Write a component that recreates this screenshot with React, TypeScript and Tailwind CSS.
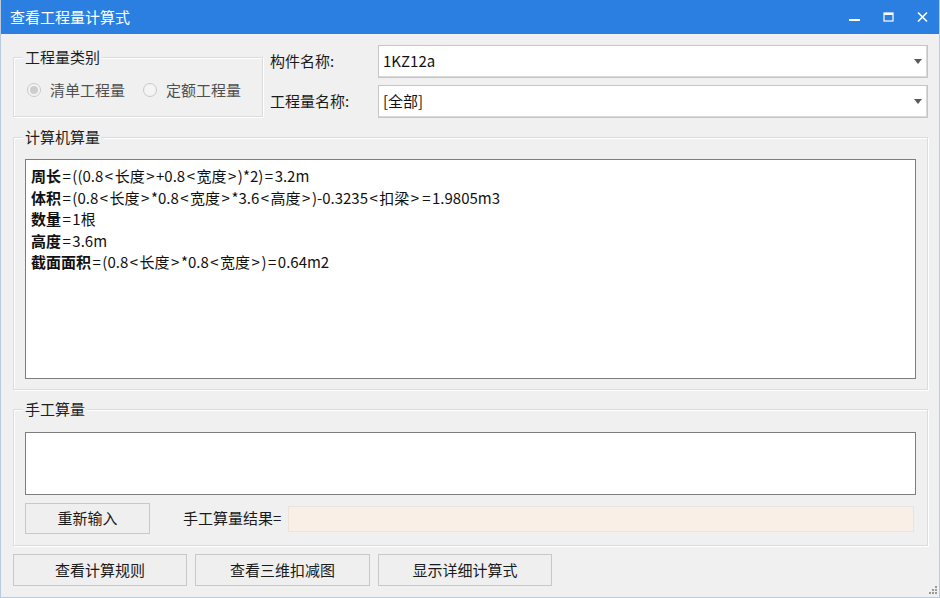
import React from "react"

const font = { fontFamily: '"Noto Sans CJK SC", "Noto Sans", sans-serif' }

function GroupBox({ title, className, children }: { title: string; className: string; children?: React.ReactNode }) {
  return (
    <div className={`relative border border-[#dcdcdc] shadow-[inset_1px_1px_0_#ffffff,1px_1px_0_#ffffff] ${className}`}>
      <span className="absolute left-[9px] top-[-12px] bg-[#f0f0f0] px-[2px] text-[15px] leading-[22px] text-[#1e1e1e]">
        {title}
      </span>
      {children}
    </div>
  )
}

function Radio({ label, checked }: { label: string; checked?: boolean }) {
  return (
    <div className="flex items-center gap-[9px]">
      <span className="flex h-[14px] w-[14px] items-center justify-center rounded-full border border-[#c9c9c9] bg-[#f4f4f4]">
        {checked && <span className="h-[8px] w-[8px] rounded-full bg-[#cdcdcd]" />}
      </span>
      <span className="text-[15px] text-[#4f4f4f]">{label}</span>
    </div>
  )
}

function Combo({ value }: { value: string }) {
  return (
    <div className="flex h-[33px] w-[550px] items-center justify-between border border-[#c6c6c6] bg-white pl-[4px] pr-[5px] shadow-[inset_-1px_-1px_0_#dadada]">
      <span className="text-[15px] text-[#111]">{value}</span>
      <svg width="8" height="5" viewBox="0 0 8 5">
        <path d="M0 0 H8 L4 5 Z" fill="#5a5a5a" />
      </svg>
    </div>
  )
}

function Button({ label, className }: { label: string; className: string }) {
  return (
    <div className={`flex items-center justify-center border border-[#c8c8c8] bg-[#efefef] text-[15px] text-[#1a1a1a] ${className}`}>
      {label}
    </div>
  )
}

const lines: [string, string][] = [
  ["周长", "=((0.8<长度>+0.8<宽度>)*2)=3.2m"],
  ["体积", "=(0.8<长度>*0.8<宽度>*3.6<高度>)-0.3235<扣梁>=1.9805m3"],
  ["数量", "=1根"],
  ["高度", "=3.6m"],
  ["截面面积", "=(0.8<长度>*0.8<宽度>)=0.64m2"],
]

// the dialog font sets < > and = wider than Noto does
function Formula({ text }: { text: string }) {
  return (
    <>
      {text.split(/([<>=])/).map((part, i) =>
        part === "<" || part === ">" || part === "=" ? (
          <span key={i} className="mx-[1.5px]">
            {part}
          </span>
        ) : (
          <span key={i}>{part}</span>
        )
      )}
    </>
  )
}

export default function App() {
  return (
    <div style={font} className="flex h-[598px] w-[940px] flex-col overflow-hidden border-x border-b border-[#b9c9de] bg-[#f0f0f0]">
      {/* title bar */}
      <div className="flex h-[34px] shrink-0 items-center justify-between bg-[#2b7fe0] pl-[9px] pr-[10px] text-white">
        <span className="text-[15px]">查看工程量计算式</span>
        <div className="flex items-center gap-[21px]">
          <svg width="13" height="12" viewBox="0 0 13 12">
            <rect x="1" y="8" width="11" height="2" fill="#fff" />
          </svg>
          <svg width="13" height="12" viewBox="0 0 13 12">
            <rect x="2" y="2" width="9" height="8" fill="none" stroke="#fff" strokeWidth="1.2" />
            <rect x="2" y="2" width="9" height="2" fill="#fff" />
          </svg>
          <svg width="13" height="12" viewBox="0 0 13 12">
            <path d="M2 1.5 L11 10.5 M11 1.5 L2 10.5" stroke="#fff" strokeWidth="1.6" />
          </svg>
        </div>
      </div>

      <div className="flex flex-col pl-[12px]">
        {/* top row */}
        <div className="mt-[11px] flex">
          <GroupBox title="工程量类别" className="mt-[12px] h-[60px] w-[250px]">
            <div className="mt-[21px] flex gap-[18px] pl-[13px]">
              <Radio label="清单工程量" checked />
              <Radio label="定额工程量" />
            </div>
          </GroupBox>
          <div className="ml-[7px] flex flex-col gap-[7px]">
            <div className="flex items-center">
              <span className="w-[108px] text-[15px] text-[#1a1a1a]">构件名称:</span>
              <Combo value="1KZ12a" />
            </div>
            <div className="flex items-center">
              <span className="w-[108px] text-[15px] text-[#1a1a1a]">工程量名称:</span>
              <Combo value="[全部]" />
            </div>
          </div>
        </div>

        {/* computer calculation */}
        <GroupBox title="计算机算量" className="mt-[19px] h-[253px] w-[915px]">
          <div className="ml-[11px] mt-[21px] h-[220px] w-[891px] border border-[#7e7e7e] bg-white pl-[5px] pt-[5px] text-[15px] leading-[21.5px] text-[#111]">
            {lines.map(([k, v]) => (
              <div key={k}>
                <span className="font-bold">{k}</span>
                <Formula text={v} />
              </div>
            ))}
          </div>
        </GroupBox>

        {/* manual calculation */}
        <GroupBox title="手工算量" className="mt-[19px] h-[137px] w-[915px]">
          <div className="ml-[11px] mt-[22px] h-[63px] w-[891px] border border-[#7e7e7e] bg-white" />
          <div className="ml-[11px] mt-[8px] flex items-center">
            <Button label="重新输入" className="h-[31px] w-[125px]" />
            <span className="ml-[33px] text-[15px] text-[#1a1a1a]">手工算量结果=</span>
            <div className="ml-[7px] h-[26px] w-[626px] border border-[#ebe4dc] bg-[#f9efe6]" />
          </div>
        </GroupBox>

        {/* bottom buttons */}
        <div className="mt-[8px] flex gap-[8px]">
          <Button label="查看计算规则" className="h-[32px] w-[174px]" />
          <Button label="查看三维扣减图" className="h-[32px] w-[175px]" />
          <Button label="显示详细计算式" className="h-[32px] w-[174px]" />
        </div>
      </div>

      {/* size grip */}
      <div className="mt-auto flex justify-end pb-[2px] pr-[2px]">
        <svg width="10" height="10" viewBox="0 0 10 10">
          {[
            [8, 0],
            [5, 3],
            [8, 3],
            [2, 6],
            [5, 6],
            [8, 6],
          ].map(([x, y]) => (
            <rect key={`${x}-${y}`} x={x} y={y} width="2" height="2" fill="#9a9a9a" />
          ))}
        </svg>
      </div>
    </div>
  )
}
